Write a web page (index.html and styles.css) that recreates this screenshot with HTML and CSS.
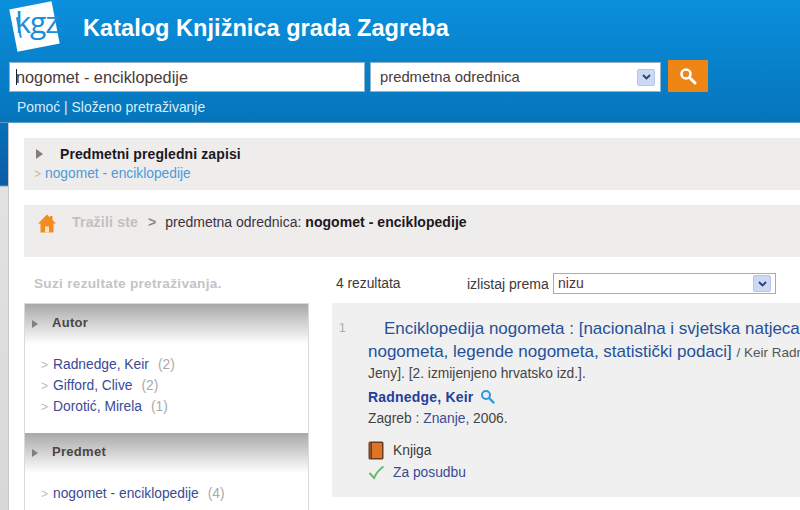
FILE: index.html
```html
<!DOCTYPE html>
<html lang="hr">
<head>
<meta charset="utf-8">
<title>Katalog Knjižnica grada Zagreba</title>
<link rel="stylesheet" href="styles.css">
</head>
<body>
<header class="top">
  <div class="brand">
    <div class="logo"><span class="logo-text">kgz</span></div>
    <h1 class="title">Katalog Knjižnica grada Zagreba</h1>
  </div>
  <div class="search">
    <div class="field query"><span class="caret"></span>nogomet - enciklopedije</div>
    <div class="field scope">predmetna odrednica
      <span class="dd"><svg width="9" height="6" viewBox="0 0 9 6"><path d="M1 1l3.500 3.500L8 1" fill="none" stroke="#2b3f73" stroke-width="1.800"/></svg></span>
    </div>
    <div class="go"><svg width="18" height="18" viewBox="0 0 18 18"><circle cx="7" cy="7" r="4.500" fill="none" stroke="#fff" stroke-width="2.600"/><path d="M10.500 10.500L16 16" stroke="#fff" stroke-width="3" stroke-linecap="round"/></svg></div>
  </div>
  <nav class="toplinks">Pomoć | Složeno pretraživanje</nav>
</header>
<div class="page">
  <div class="strip"></div>
  <main class="main">
    <section class="band subject">
      <div class="subject-head"><span class="tri"></span><b>Predmetni pregledni zapisi</b></div>
      <div class="subject-link"><span class="chev">&gt;</span>nogomet - enciklopedije</div>
    </section>
    <section class="band crumbs">
      <svg class="home" width="18" height="19" viewBox="0 0 18 19"><path d="M9 0.500L0 9.500H2.500V18.500H15.500V9.500H18L14.500 6V2H12V3.500Z" fill="#f28c1e"/><rect x="7" y="12.500" width="4" height="6" fill="#fbe3c4"/></svg>
      <span class="searched">Tražili ste</span>
      <span class="crumb-arrow">&gt;</span>
      <span class="crumb-text">predmetna odrednica: <b>nogomet - enciklopedije</b></span>
    </section>
    <div class="columns">
      <aside class="side">
        <div class="narrow">Suzi rezultate pretraživanja.</div>
        <div class="facets">
          <div class="facet-head"><span class="tri small"></span>Autor</div>
          <ul class="facet-list">
            <li><span class="chev">&gt;</span><a>Radnedge, Keir</a><span class="count">(2)</span></li>
            <li><span class="chev">&gt;</span><a>Gifford, Clive</a><span class="count">(2)</span></li>
            <li><span class="chev">&gt;</span><a>Dorotić, Mirela</a><span class="count">(1)</span></li>
          </ul>
          <div class="facet-head"><span class="tri small"></span>Predmet</div>
          <ul class="facet-list">
            <li><span class="chev">&gt;</span><a>nogomet - enciklopedije</a><span class="count">(4)</span></li>
          </ul>
        </div>
      </aside>
      <div class="results">
        <div class="toolbar">
          <span class="total">4 rezultata</span>
          <span class="sort-label">izlistaj prema</span>
          <div class="sort">nizu<span class="dd"><svg width="9" height="6" viewBox="0 0 9 6"><path d="M1 1l3.500 3.500L8 1" fill="none" stroke="#2b3f73" stroke-width="1.800"/></svg></span></div>
        </div>
        <article class="record">
          <div class="num">1</div>
          <div class="body">
            <div class="rec-title"><span class="indent"></span>Enciklopedija nogometa : [nacionalna i svjetska natjecanja,<br>nogometa, legende nogometa, statistički podaci] <small>/ Keir Radnedge ; [prevela</small></div>
            <div class="line first">Jeny]. [2. izmijenjeno hrvatsko izd.].</div>
            <div class="line author"><b>Radnedge, Keir</b>
              <svg class="lens" width="15" height="15" viewBox="0 0 15 15"><circle cx="6" cy="6" r="4" fill="none" stroke="#2f9ad8" stroke-width="2"/><path d="M9 9L13.500 13.500" stroke="#2f9ad8" stroke-width="2.400" stroke-linecap="round"/></svg>
            </div>
            <div class="line">Zagreb : <a>Znanje,</a> 2006.</div>
            <div class="meta book">
              <svg width="17" height="19" viewBox="0 0 17 19"><rect x="0.500" y="0.500" width="15" height="18" rx="1.500" fill="#6b3a22"/><rect x="4" y="2" width="10" height="15" fill="#dd7426"/><rect x="1.500" y="1.500" width="1.500" height="16" fill="#93512c"/></svg>
              <span>Knjiga</span>
            </div>
            <div class="meta avail">
              <svg width="17" height="15" viewBox="0 0 17 15"><path d="M1.500 8L6 13C8 8.500 11 4.500 15.500 1.500" fill="none" stroke="#62bd6a" stroke-width="2"/></svg>
              <a>Za posudbu</a>
            </div>
          </div>
        </article>
      </div>
    </div>
  </main>
</div>
</body>
</html>
```
FILE: styles.css
```css
* { box-sizing: border-box; }
html, body { margin: 0; padding: 0; }
body {
  width: 800px;
  height: 510px;
  overflow: hidden;
  background: #fff;
  font-family: "Liberation Sans", Arial, sans-serif;
  font-size: 14px;
  color: #333;
}
a { color: #3a4a96; }
ul { list-style: none; margin: 0; padding: 0; }

.top {
  height: 123px;
  padding: 0 0 0 9px;
  background: linear-gradient(#0b8fdc, #0675bb);
  border-bottom: 1px solid #5d9cc4;
}
.brand { height: 60px; display: flex; align-items: flex-start; }
.logo {
  width: 43px;
  height: 43px;
  margin: 5px 0 0 4px;
  background: #fff;
  transform: rotate(-11deg);
  position: relative;
  flex: none;
}
.logo::before {
  content: "";
  position: absolute;
  left: 5px;
  top: 9px;
  width: 2px;
  height: 21px;
  background: #2a98dc;
}
.logo-text {
  position: absolute;
  left: 3px;
  top: 3px;
  font-family: "Open Sans", sans-serif;
  font-size: 30px;
  line-height: 30px;
  letter-spacing: -1px;
  color: #1c8dd8;
  white-space: nowrap;
  transform: rotate(11deg);
}
.title {
  margin: 14px 0 0 27px;
  font-size: 23.600px;
  line-height: 28px;
  font-weight: bold;
  color: #fff;
}
.search { display: flex; align-items: flex-end; height: 32px; }
.field {
  height: 30px;
  background: #fff;
  border: 1px solid #8fb3cf;
  line-height: 28px;
  color: #4a3a3a;
}
.query { width: 356px; padding-left: 6px; position: relative; font-size: 16.300px; }
.caret {
  position: absolute;
  left: 6px;
  top: 6px;
  width: 1px;
  height: 16px;
  background: #222;
}
.scope {
  width: 291px;
  margin-left: 5px;
  padding-left: 9px;
  font-size: 14.800px;
  display: flex;
  justify-content: space-between;
  padding-right: 5px;
  align-items: center;
}
.dd {
  width: 18px;
  height: 17px;
  background: #cdd8f4;
  border: 1px solid #b6c5e8;
  border-radius: 2px;
  display: flex;
  align-items: center;
  justify-content: center;
}
.go {
  width: 40px;
  height: 32px;
  margin-left: 7px;
  background: #ee8615;
  display: flex;
  align-items: center;
  justify-content: center;
}
.toplinks {
  margin: 6px 0 0 8px;
  font-size: 13.900px;
  line-height: 18px;
  color: #d9eefa;
}

.page { display: flex; height: 387px; }
.strip {
  width: 9px;
  flex: none;
  background: linear-gradient(#0771b8 0, #0e5aa6 62px, #e2e2e2 64px, #d8d8d8 100%);
  border-right: 1px solid #c9c9c9;
}
.main { flex: 1; padding: 15px 0 0 15px; min-width: 0; }
.band { background: #efecec; height: 52px; }
.subject { padding: 5px 0 0 0; }
.subject-head {
  display: flex;
  align-items: center;
  height: 21px;
  padding-left: 12px;
  color: #1c1820;
  font-size: 14px;
}
.subject-head b { margin-left: 17px; letter-spacing: 0.100px; }
.tri {
  width: 0;
  height: 0;
  border-left: 7px solid #7f7f7f;
  border-top: 5px solid transparent;
  border-bottom: 5px solid transparent;
}
.tri.small { border-left-width: 6px; border-top-width: 4px; border-bottom-width: 4px; }
.chev { color: #bbb; font-size: 12px; margin-right: 4px; }
.subject-link {
  padding-left: 9px;
  line-height: 20px;
  font-size: 13.800px;
  color: #4d9bd6;
}
.subject-link .chev { margin-right: 4px; margin-left: 1px; }
.crumbs {
  margin-top: 15px;
  padding: 8px 0 0 14px;
  display: flex;
  align-items: flex-start;
  font-size: 14px;
  line-height: 18px;
  color: #3b3340;
}
.home { flex: none; margin-top: 1px; }
.searched { margin-left: 16px; color: #c2bfbf; font-weight: bold; font-size: 14px; letter-spacing: 0.200px; }
.crumb-arrow { margin: 0 9px 0 10px; color: #8a8a8a; font-weight: bold; }
.crumb-text { white-space: nowrap; }
.crumb-text b { color: #1c1820; font-size: 14px; letter-spacing: 0.050px; }

.columns { display: flex; margin-top: 17px; }
.side { width: 285px; flex: none; }
.narrow {
  padding-left: 10px;
  height: 29px;
  line-height: 20px;
  font-weight: bold;
  font-size: 13.600px;
  letter-spacing: 0.300px;
  color: #c4c4c4;
}
.facets { border: 1px solid #d9d9d9; border-bottom: 0; height: 210px; overflow: hidden; }
.facet-head {
  height: 40px;
  background: linear-gradient(#a8a8a8, #fff);
  display: flex;
  align-items: center;
  padding: 0 0 4px 7px;
  font-weight: bold;
  font-size: 13px;
  letter-spacing: 0.300px;
  color: #4a4646;
}
.facet-head .tri { margin: 4px 14px 0 0; }
.facet-list { padding: 10px 0 16px 16px; }
.facet-list li { line-height: 21px; height: 21px; font-size: 13.800px; white-space: nowrap; }
.facet-list .chev { margin-right: 5px; }
.count { color: #aaa; margin-left: 9px; }

.results { flex: 1; margin-left: 23px; min-width: 0; }
.toolbar { display: flex; align-items: center; height: 29px; padding-bottom: 10px; }
.total { margin-left: 4px; width: 131px; font-size: 13.800px; color: #3a3a3a; }
.sort-label { width: 86px; font-size: 14px; color: #3a3a3a; }
.sort {
  width: 223px;
  height: 21px;
  border: 1px solid #8fb3cf;
  background: #fff;
  font-size: 14px;
  line-height: 19px;
  padding: 0 4px;
  color: #5a2f2f;
  display: flex;
  justify-content: space-between;
  align-items: center;
}
.record {
  background: #f0f0f0;
  height: 194px;
  display: flex;
  padding-top: 14px;
  overflow: hidden;
}
.num { width: 36px; padding-left: 7px; font-size: 12px; line-height: 22px; color: #aaa; flex: none; }
.body { flex: 1; min-width: 0; }
.rec-title { font-size: 17px; line-height: 23px; color: #24509a; white-space: nowrap; }
.rec-title small { font-size: 13.500px; color: #555; }
.indent { display: inline-block; width: 16px; }
.line { font-size: 13.800px; line-height: 22.500px; color: #444; white-space: nowrap; }
.line.first { margin-top: -1px; }
.author { display: flex; align-items: center; }
.author b { font-size: 14px; color: #24409a; letter-spacing: 0.200px; }
.lens { margin-left: 6px; }
.meta { display: flex; align-items: center; height: 22px; font-size: 13.800px; white-space: nowrap; }
.meta svg { flex: none; width: 17px; margin-right: 8px; }
.book { margin-top: 9px; color: #3a3a3a; }
```
